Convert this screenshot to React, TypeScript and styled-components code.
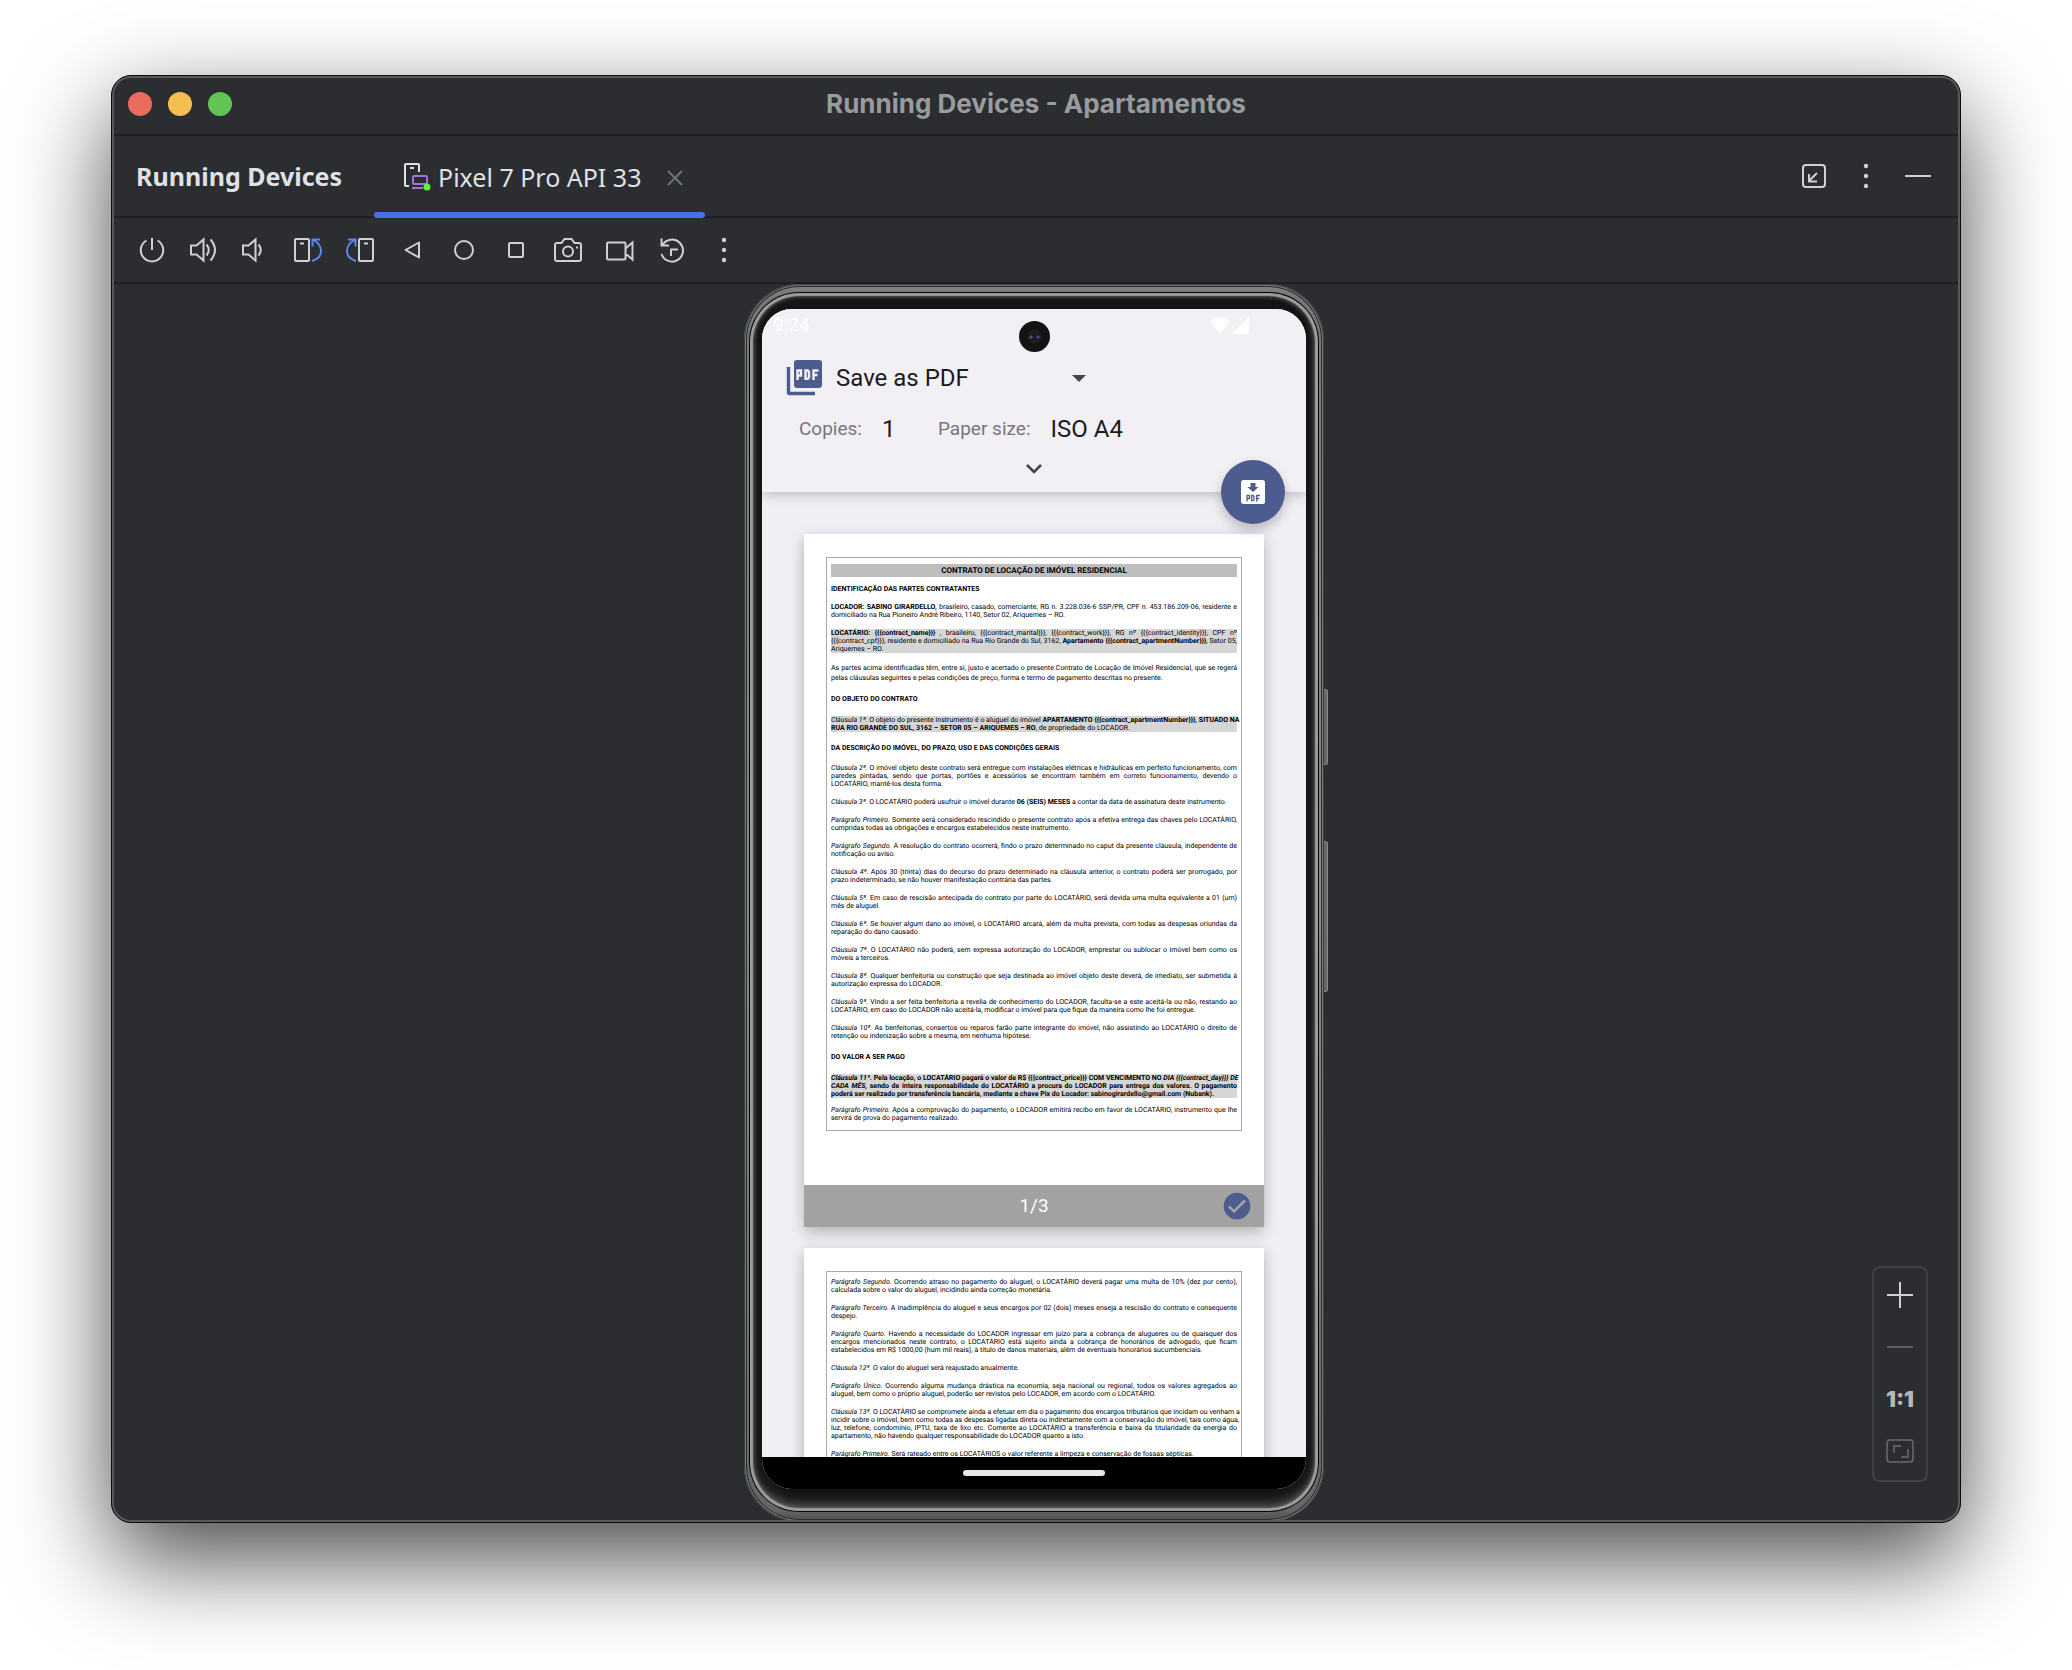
import React from "react";
import styled, { createGlobalStyle, css } from "styled-components";

const GlobalStyle = createGlobalStyle`
  *, *::before, *::after { box-sizing: border-box; }
  body { margin: 0; background: #fff; overflow: hidden; }
  button, input, select { font: inherit; color: inherit; background: none; border: 0; padding: 0; margin: 0; }
  p, h1, h2, h3 { margin: 0; font: inherit; }
`;

const ui = `"Noto Sans", "Open Sans", sans-serif`;
const android = `Roboto, "Liberation Sans", sans-serif`;

/* ---------- window ---------- */

const Desktop = styled.div`
  height: 100vh;
  padding: 75px 111px 147px;
`;

const Window = styled.main`
  height: 100%;
  display: flex;
  flex-direction: column;
  background: #2b2d30;
  border-radius: 20px;
  overflow: hidden;
  color: #dfe1e5;
  font-family: ${ui};
  border: 1px solid #0b0c0c;
  box-shadow: 0 36px 96px rgba(0, 0, 0, 0.72);
  position: relative;

  &::after {
    content: "";
    position: absolute;
    inset: 0;
    border: 2px solid #58595b;
    border-radius: 19px;
    pointer-events: none;
  }
`;

const TitleBar = styled.header`
  flex: none;
  height: 60px;
  display: grid;
  grid-template-columns: 1fr auto 1fr;
  align-items: center;
  padding: 0 16px 3px;
  border-bottom: 2px solid #1e1f22;
`;

const Lights = styled.div`
  display: flex;
  gap: 16px;
`;

const Light = styled.button<{ $color: string }>`
  width: 24px;
  height: 24px;
  border-radius: 50%;
  background: ${(p) => p.$color};
`;

const WindowTitle = styled.h1`
  font: 700 26px/32px Inter, sans-serif;
  color: #9a9b9d;
`;

const TabBar = styled.div`
  flex: none;
  height: 82px;
  display: flex;
  align-items: stretch;
  padding: 0 16px 0 24px;
  border-bottom: 2px solid #1e1f22;
`;

const ToolTitle = styled.h2`
  align-self: center;
  font: 700 25px/36px ${ui};
  margin-right: 32px;
`;

const Tab = styled.div`
  display: flex;
  align-items: center;
  padding: 0 20px 0 30px;
  margin-bottom: -2px;
  position: relative;
  font: 400 25px/36px ${ui};

  &::after {
    content: "";
    position: absolute;
    left: 0;
    right: 0;
    bottom: 0;
    height: 6px;
    border-radius: 3px;
    background: #4473e8;
  }
`;

const TabLabel = styled.button`
  display: flex;
  align-items: center;
  gap: 6px;
`;

const CloseTab = styled.button`
  display: flex;
  margin-left: 24px;
  color: #6f737a;
`;

const Spacer = styled.div`
  flex: 1;
`;

const ToolBar = styled.div`
  flex: none;
  height: 66px;
  display: flex;
  align-items: center;
  padding: 0 14px;
  border-bottom: 2px solid #1e1f22;
`;

const IconButton = styled.button<{ $dim?: boolean }>`
  width: 52px;
  height: 52px;
  display: grid;
  place-items: center;
  align-self: center;
  color: ${(p) => (p.$dim ? "#5a5d60" : "#ced0d6")};

  svg {
    display: block;
  }
`;

const Stage = styled.section`
  flex: 1;
  min-height: 0;
  display: flex;
  justify-content: center;
  position: relative;
`;

const ZoomPanel = styled.div`
  position: absolute;
  right: 32px;
  bottom: 40px;
  width: 56px;
  display: flex;
  flex-direction: column;
  align-items: center;
  padding: 1px 0 3px;
  border: 2px solid #3f4142;
  border-radius: 8px;
  background: #2b2d30;
`;

const ActualSize = styled(IconButton)`
  font: 900 22px/24px Inter, sans-serif;
  color: #b4b6b9;
`;

/* ---------- phone ---------- */

const Device = styled.div`
  display: flex;
`;

const Frame = styled.div`
  display: flex;
  padding: 8px 5px 10px;
  border-radius: 56px;
  background: linear-gradient(#858585, #777 1%, #8a8a8a 50%, #666 99%, #4c4c4c);
  box-shadow: inset 0 0 0 1px #3b3d3f, inset 0 0 0 2px #777a7a, inset 0 0 0 3px #2a2c2d;
`;

const Bezel = styled.div`
  display: flex;
  padding: 17px 13px 23px;
  border-radius: 50px;
  background: #141414;
  box-shadow: inset 0 0 0 1px #060606, inset 0 0 1px 4px #9c9c9c, inset 0 0 4px 5px #555,
    inset 0 -8px 12px #555;
`;

const SideButtons = styled.div`
  width: 4px;
  display: flex;
  flex-direction: column;
  gap: 76px;
  padding-top: 405px;
`;

const SideButton = styled.span<{ $length: number }>`
  height: ${(p) => p.$length}px;
  border: 1px solid #8a8a8a;
  border-left: 0;
  border-radius: 0 3px 3px 0;
  background: #666;
`;

const Screen = styled.div`
  width: 544px;
  display: flex;
  flex-direction: column;
  position: relative;
  overflow: hidden;
  border-radius: 30px;
  background: #f2f0f5;
  color: #1b1b1f;
  font-family: ${android};
`;

const PrintHeader = styled.header`
  flex: none;
  position: relative;
  z-index: 1;
  background: #f2f0f5;
  box-shadow: 0 2px 12px rgba(0, 0, 0, 0.24);
`;

const StatusBar = styled.div`
  height: 32px;
  display: flex;
  justify-content: space-between;
  align-items: center;
  padding: 0 57px 0 11px;
  font-size: 19px;
  line-height: 24px;
  color: #fff;
`;

const StatusIcons = styled.div`
  display: flex;
  gap: 2px;
`;

const Camera = styled.span`
  position: absolute;
  z-index: 3;
  top: 12px;
  left: 50%;
  width: 31px;
  height: 31px;
  margin-left: -15px;
  border-radius: 50%;
  background: radial-gradient(circle at 12px 16px, #3f6068 0 1px, transparent 2px),
    radial-gradient(circle at 19px 16px, #4747a0 0 1px, transparent 2px),
    radial-gradient(circle, #1d1d20 0 6px, #131314 8px);
`;

const Destination = styled.div`
  height: 44px;
  margin-top: 15px;
  padding-left: 24px;
  display: flex;
  align-items: center;
  gap: 13px;
`;

const DestinationPicker = styled.label`
  display: grid;
  grid-template-columns: 236px 14px;
  align-items: center;

  select {
    grid-area: 1 / 1 / 2 / 3;
  }

  svg {
    grid-area: 1 / 2;
    pointer-events: none;
  }
`;

const PlainSelect = styled.select`
  appearance: none;
  outline: 0;
  height: 32px;
  font-size: 24px;
  line-height: 32px;
`;

const Options = styled.div`
  height: 32px;
  margin-top: 13px;
  padding-left: 37px;
  display: flex;
  align-items: center;
  gap: 20px;
  font-size: 24px;
  line-height: 32px;
`;

const OptionLabel = styled.label`
  font-size: 19px;
  line-height: 24px;
  color: #77767d;
`;

const CopiesInput = styled.input`
  width: 36px;
  height: 32px;
  outline: 0;
`;

const ExpandButton = styled.button`
  width: 100%;
  height: 47px;
  display: grid;
  place-items: center;
  color: #46464f;
`;

const SaveButton = styled.button`
  position: absolute;
  z-index: 2;
  top: 151px;
  right: 21px;
  width: 64px;
  height: 64px;
  display: grid;
  place-items: center;
  border-radius: 50%;
  background: #4c5c8f;
  box-shadow: 0 6px 12px rgba(0, 0, 0, 0.22);
`;

const Preview = styled.div`
  flex: 1 1 0;
  min-height: 0;
  overflow: hidden;
  display: flex;
  flex-direction: column;
  gap: 21px;
  padding: 42px 42px 0;
  background: #f0eff4;
`;

const Sheet = styled.article`
  flex: none;
  background: #fff;
  box-shadow: 0 5px 14px rgba(0, 0, 0, 0.26);
`;

const Paper = styled.div`
  height: 651px;
  padding: 23px 22px;
`;

const PaperFrame = styled.div<{ $open?: boolean }>`
  ${(p) => p.$open && css`height: 600px;`}
  padding: 6px 4px 8px;
  border: 1px solid #a9a9a9;
  font-size: 7px;
  line-height: 8px;
  color: #000;
  text-rendering: geometricPrecision;
`;

const SheetFooter = styled.footer`
  height: 42px;
  display: grid;
  grid-template-columns: 1fr auto 1fr;
  align-items: center;
  padding: 0 13px;
  background: #a2a2a2;
  color: #fff;
  font-size: 19px;
  line-height: 24px;
`;

const PageCheck = styled.label`
  grid-column: 3;
  justify-self: end;
  display: grid;

  input {
    grid-area: 1 / 1;
    appearance: none;
    width: 28px;
    height: 28px;
  }

  svg {
    grid-area: 1 / 1;
    pointer-events: none;
  }
`;

const PageNumber = styled.span`
  grid-column: 2;
`;

const ContractTitle = styled.h2`
  font-size: 8px;
  font-weight: 700;
  line-height: 13px;
  text-align: center;
  background: #bebebe;
`;

const Heading = styled.h3<{ $top: number }>`
  margin-top: ${(p) => p.$top}px;
  font-weight: 700;
`;

const Paragraph = styled.p<{ $top: number; $mark?: boolean; $tall?: boolean; $bold?: boolean }>`
  margin-top: ${(p) => p.$top}px;
  background: ${(p) => (p.$mark ? "#d6d6d6" : "none")};
  font-weight: ${(p) => (p.$bold ? 700 : 400)};
  line-height: ${(p) => (p.$tall ? 10 : 8)}px;
`;

const Line = styled.span`
  display: block;
  white-space: nowrap;
  text-align: justify;
  text-align-last: justify;

  &:last-child {
    text-align-last: left;
  }
`;

const NavBar = styled.div`
  flex: none;
  height: 32px;
  display: grid;
  place-items: center;
  background: #000;
`;

const NavPill = styled.span`
  width: 142px;
  height: 6px;
  border-radius: 3px;
  background: #e8e8e8;
`;

/* ---------- icons ---------- */

const Glyph = ({ children, size = 32 }: { children: React.ReactNode; size?: number }) => (
  <svg width={size} height={size} viewBox={`0 0 ${size} ${size}`} fill="none" stroke="currentColor" strokeWidth="2" aria-hidden="true">
    {children}
  </svg>
);

const speaker = <path d="M3 11.5h5.5L15.5 5.5v21l-7-6H3z" />;
const rotate = (
  <>
    <rect x="3" y="5" width="14" height="22" rx="1" />
    <path d="M8 9.5h4" />
    <path d="M20.5 12.5V5.5H28M21.5 6C32 12 31.5 23.5 20 27" stroke="#5a87f0" />
  </>
);
const dots = (
  <g fill="currentColor" stroke="none">
    <circle cx="16" cy="6" r="2.2" />
    <circle cx="16" cy="16" r="2.2" />
    <circle cx="16" cy="26" r="2.2" />
  </g>
);

const tools: { name: string; icon: React.ReactNode }[] = [
  { name: "Power", icon: <path d="M16 4v12M10.5 6.5A11.2 11.2 0 1 0 21.5 6.5" /> },
  { name: "Volume Up", icon: <>{speaker}<path d="M18.5 10.5q4.5 5.5 0 11M22.5 5.5q9 10.5 0 21" /></> },
  { name: "Volume Down", icon: <>{speaker}<path d="M18.5 10.5q4.5 5.5 0 11" /></> },
  { name: "Rotate Left", icon: rotate },
  { name: "Rotate Right", icon: <g transform="matrix(-1 0 0 1 32 0)">{rotate}</g> },
  { name: "Back", icon: <path d="M23 8.5v15L9.5 16z" strokeLinejoin="round" /> },
  { name: "Home", icon: <circle cx="16" cy="16" r="9" /> },
  { name: "Overview", icon: <rect x="9" y="9" width="14" height="14" rx="1" /> },
  {
    name: "Take Screenshot",
    icon: (
      <>
        <path d="M5 9h4.5l3-4h7l3 4H27a2 2 0 0 1 2 2v14a2 2 0 0 1-2 2H5a2 2 0 0 1-2-2V11a2 2 0 0 1 2-2z" />
        <circle cx="16" cy="17.5" r="5" />
        <path d="M24 13.5h2" />
      </>
    ),
  },
  {
    name: "Record Screen",
    icon: <path d="M4 8.5h16.5a1 1 0 0 1 1 1v15a1 1 0 0 1-1 1H4a1 1 0 0 1-1-1v-15a1 1 0 0 1 1-1zM21.5 14.5l7-6v17l-7-6" />,
  },
  {
    name: "Snapshots",
    icon: <path d="M5.5 4.500v7h7.500M6.500 11A11 11 0 1 1 5.500 20M15 22v-6.500h7" />,
  },
  { name: "More", icon: dots },
];

const DeviceIcon = () => (
  <Glyph size={28}>
    <path d="M5 23H2a1 1 0 0 1-1-1V2a1 1 0 0 1 1-1h12a1 1 0 0 1 1 1v7" />
    <path d="M6 5h4" />
    <rect x="9" y="13" width="14" height="8" rx="1" stroke="#a06fe0" />
    <path d="M8 25h11" stroke="#a06fe0" />
    <circle cx="23" cy="24" r="3.5" fill="#62f045" stroke="none" />
  </Glyph>
);

const PdfStackIcon = () => (
  <svg width="37" height="38" viewBox="0 0 37 38" aria-hidden="true">
    <path d="M2.500 8v25.500a1 1 0 0 0 1 1h25.500" fill="none" stroke="#4c5c8f" strokeWidth="3.4" />
    <rect x="8" y="1" width="28" height="28" rx="3" fill="#4c5c8f" />
    <g fill="none" stroke="#f2f0f5" strokeWidth="2.4">
      <path d="M11.5 21v-9.500h3.500v5h-3.500M19.500 11.500v8.300h2.200l1.300-1.300v-5.700l-1.300-1.300zM27.500 21v-9.500h5M27.500 16h4" />
    </g>
  </svg>
);

const SaveIcon = () => (
  <svg width="24" height="24" viewBox="0 0 24 24" aria-hidden="true">
    <rect width="24" height="24" rx="2.5" fill="#fff" />
    <path d="M9.5 3h5v4h3L12 12 6.5 7h3z" fill="#4c5c8f" />
    <path d="M6 21.5v-6h2.500v3H6M10.700 15.500v5.200h1.300l1-1v-3.200l-1-1zM15.700 21.500v-6h3.300M15.700 18.500h2.600" fill="none" stroke="#4c5c8f" strokeWidth="1.3" />
  </svg>
);

/* ---------- contract ---------- */

type Block =
  | { heading: string; top: number }
  | { lines: React.ReactNode[]; top: number; mark?: boolean; tall?: boolean; bold?: boolean };

const B = ({ children }: { children: React.ReactNode }) => <b>{children}</b>;

const firstPage: Block[] = [
  { heading: "IDENTIFICAÇÃO DAS PARTES CONTRATANTES", top: 8 },
  {
    top: 10,
    lines: [
      <><B>LOCADOR: SABINO GIRARDELLO,</B> brasileiro, casado, comerciante, RG n. 3.228.036-6 SSP/PR, CPF n. 453.186.209-06, residente e</>,
      "domiciliado na Rua Pioneiro André Ribeiro, 1140, Setor 02, Ariquemes – RO.",
    ],
  },
  {
    top: 10,
    mark: true,
    lines: [
      <><B>LOCATÁRIO: {"{{{contract_name}}}"}</B> , brasileiro, {"{{{contract_marital}}}"}, {"{{{contract_work}}}"}, RG nº {"{{{contract_identity}}}"}, CPF nº</>,
      <>{"{{{contract_cpf}}}"}, residente e domiciliado na Rua Rio Grande do Sul, 3162, <B>Apartamento {"{{{contract_apartmentNumber}}}"}</B>, Setor 05,</>,
      "Ariquemes – RO.",
    ],
  },
  {
    top: 10,
    tall: true,
    lines: [
      "As partes acima identificadas têm, entre si, justo e acertado o presente Contrato de Locação de Imóvel Residencial, que se regerá",
      "pelas cláusulas seguintes e pelas condições de preço, forma e termo de pagamento descritas no presente.",
    ],
  },
  { heading: "DO OBJETO DO CONTRATO", top: 12 },
  {
    top: 13,
    mark: true,
    lines: [
      <><i>Cláusula 1ª.</i> O objeto do presente instrumento é o aluguel do imóvel <B>APARTAMENTO {"{{{contract_apartmentNumber}}}"}, SITUADO NA</B></>,
      <><B>RUA RIO GRANDE DO SUL, 3162 – SETOR 05 – ARIQUEMES – RO</B>, de propriedade do LOCADOR.</>,
    ],
  },
  { heading: "DA DESCRIÇÃO DO IMÓVEL, DO PRAZO, USO E DAS CONDIÇÕES GERAIS", top: 12 },
  {
    top: 12,
    lines: [
      <><i>Cláusula 2ª.</i> O imóvel objeto deste contrato será entregue com instalações elétricas e hidráulicas em perfeito funcionamento, com</>,
      "paredes pintadas, sendo que portas, portões e acessórios se encontram também em correto funcionamento, devendo o",
      "LOCATÁRIO, mantê-los desta forma.",
    ],
  },
  {
    top: 10,
    lines: [<><i>Cláusula 3ª.</i> O LOCATÁRIO poderá usufruir o imóvel durante <B>06 (SEIS) MESES</B> a contar da data de assinatura deste instrumento.</>],
  },
  {
    top: 10,
    lines: [
      <><i>Parágrafo Primeiro.</i> Somente será considerado rescindido o presente contrato após a efetiva entrega das chaves pelo LOCATÁRIO,</>,
      "cumpridas todas as obrigações e encargos estabelecidos neste instrumento.",
    ],
  },
  {
    top: 10,
    lines: [
      <><i>Parágrafo Segundo.</i> A resolução do contrato ocorrerá, findo o prazo determinado no caput da presente cláusula, independente de</>,
      "notificação ou aviso.",
    ],
  },
  {
    top: 10,
    lines: [
      <><i>Cláusula 4ª.</i> Após 30 (trinta) dias do decurso do prazo determinado na cláusula anterior, o contrato poderá ser prorrogado, por</>,
      "prazo indeterminado, se não houver manifestação contrária das partes.",
    ],
  },
  {
    top: 10,
    lines: [
      <><i>Cláusula 5ª.</i> Em caso de rescisão antecipada do contrato por parte do LOCATÁRIO, será devida uma multa equivalente a 01 (um)</>,
      "mês de aluguel.",
    ],
  },
  {
    top: 10,
    lines: [
      <><i>Cláusula 6ª.</i> Se houver algum dano ao imóvel, o LOCATÁRIO arcará, além da multa prevista, com todas as despesas oriundas da</>,
      "reparação do dano causado.",
    ],
  },
  {
    top: 10,
    lines: [
      <><i>Cláusula 7ª.</i> O LOCATÁRIO não poderá, sem expressa autorização do LOCADOR, emprestar ou sublocar o imóvel bem como os</>,
      "móveis a terceiros.",
    ],
  },
  {
    top: 10,
    lines: [
      <><i>Cláusula 8ª.</i> Qualquer benfeitoria ou construção que seja destinada ao imóvel objeto deste deverá, de imediato, ser submetida à</>,
      "autorização expressa do LOCADOR.",
    ],
  },
  {
    top: 10,
    lines: [
      <><i>Cláusula 9ª.</i> Vindo a ser feita benfeitoria a revelia de conhecimento do LOCADOR, faculta-se a este aceitá-la ou não, restando ao</>,
      "LOCATÁRIO, em caso do LOCADOR não aceitá-la, modificar o imóvel para que fique da maneira como lhe foi entregue.",
    ],
  },
  {
    top: 10,
    lines: [
      <><i>Cláusula 10ª.</i> As benfeitorias, consertos ou reparos farão parte integrante do imóvel, não assistindo ao LOCATÁRIO o direito de</>,
      "retenção ou indenização sobre a mesma, em nenhuma hipótese.",
    ],
  },
  { heading: "DO VALOR A SER PAGO", top: 13 },
  {
    top: 13,
    mark: true,
    bold: true,
    lines: [
      <><i>Cláusula 11ª.</i> Pela locação, o LOCATÁRIO pagará o valor de R$ {"{{{contract_price}}}"} COM VENCIMENTO NO <i>DIA {"{{{contract_day}}}"} DE</i></>,
      <><i>CADA MÊS,</i> sendo de inteira responsabilidade do LOCATÁRIO a procura do LOCADOR para entrega dos valores. O pagamento</>,
      "poderá ser realizado por transferência bancária, mediante a chave Pix do Locador: sabinogirardello@gmail.com (Nubank).",
    ],
  },
  {
    top: 8,
    lines: [
      <><i>Parágrafo Primeiro.</i> Após a comprovação do pagamento, o LOCADOR emitirá recibo em favor de LOCATÁRIO, instrumento que lhe</>,
      "servirá de prova do pagamento realizado.",
    ],
  },
];

const secondPage: Block[] = [
  {
    top: 0,
    lines: [
      <><i>Parágrafo Segundo.</i> Ocorrendo atraso no pagamento do aluguel, o LOCATÁRIO deverá pagar uma multa de 10% (dez por cento),</>,
      "calculada sobre o valor do aluguel, incidindo ainda correção monetária.",
    ],
  },
  {
    top: 10,
    lines: [
      <><i>Parágrafo Terceiro.</i> A inadimplência do aluguel e seus encargos por 02 (dois) meses enseja a rescisão do contrato e consequente</>,
      "despejo.",
    ],
  },
  {
    top: 10,
    lines: [
      <><i>Parágrafo Quarto.</i> Havendo a necessidade do LOCADOR ingressar em juízo para a cobrança de alugueres ou de quaisquer dos</>,
      "encargos mencionados neste contrato, o LOCATÁRIO está sujeito ainda a cobrança de honorários de advogado, que ficam",
      "estabelecidos em R$ 1000,00 (hum mil reais), à título de danos materiais, além de eventuais honorários sucumbenciais.",
    ],
  },
  { top: 10, lines: [<><i>Cláusula 12ª.</i> O valor do aluguel será reajustado anualmente.</>] },
  {
    top: 10,
    lines: [
      <><i>Parágrafo Único.</i> Ocorrendo alguma mudança drástica na economia, seja nacional ou regional, todos os valores agregados ao</>,
      "aluguel, bem como o próprio aluguel, poderão ser revistos pelo LOCADOR, em acordo com o LOCATÁRIO.",
    ],
  },
  {
    top: 10,
    lines: [
      <><i>Cláusula 13ª.</i> O LOCATÁRIO se compromete ainda a efetuar em dia o pagamento dos encargos tributários que incidam ou venham a</>,
      "incidir sobre o imóvel, bem como todas as despesas ligadas direta ou indiretamente com a conservação do imóvel, tais como água,",
      "luz, telefone, condomínio, IPTU, taxa de lixo etc. Comente ao LOCATÁRIO a transferência e baixa da titularidade da energia do",
      "apartamento, não havendo qualquer responsabilidade do LOCADOR quanto a isto.",
    ],
  },
  {
    top: 10,
    lines: [<><i>Parágrafo Primeiro.</i> Será rateado entre os LOCATÁRIOS o valor referente a limpeza e conservação de fossas sépticas.</>],
  },
];

const Blocks = ({ blocks }: { blocks: Block[] }) => (
  <>
    {blocks.map((block, i) =>
      "heading" in block ? (
        <Heading key={i} $top={block.top}>{block.heading}</Heading>
      ) : (
        <Paragraph key={i} $top={block.top} $mark={block.mark} $tall={block.tall} $bold={block.bold}>
          {block.lines.map((line, j) => (
            <Line key={j}>{line}</Line>
          ))}
        </Paragraph>
      )
    )}
  </>
);

const PrintScreen = () => (
  <Screen>
    <Camera />
    <PrintHeader>
      <StatusBar>
        <span>9:24</span>
        <StatusIcons>
          <svg width="20" height="17" viewBox="0 0 20 17" aria-hidden="true">
            <path d="M0 4.5Q10-4 20 4.5L10 17z" fill="#fff" />
          </svg>
          <svg width="17" height="17" viewBox="0 0 17 17" aria-hidden="true">
            <path d="M17 0v17H0z" fill="#fff" />
          </svg>
        </StatusIcons>
      </StatusBar>
      <Destination>
        <PdfStackIcon />
        <DestinationPicker>
          <PlainSelect aria-label="Destination">
            <option>Save as PDF</option>
          </PlainSelect>
          <svg width="14" height="7" viewBox="0 0 14 7" aria-hidden="true">
            <path d="M0 0h14L7 7z" fill="#46464f" />
          </svg>
        </DestinationPicker>
      </Destination>
      <Options>
        <OptionLabel htmlFor="copies">Copies:</OptionLabel>
        <CopiesInput id="copies" defaultValue="1" />
        <OptionLabel htmlFor="paper">Paper size:</OptionLabel>
        <PlainSelect id="paper">
          <option>ISO A4</option>
        </PlainSelect>
      </Options>
      <ExpandButton aria-label="More options">
        <svg width="16" height="10" viewBox="0 0 16 10" fill="none" stroke="currentColor" strokeWidth="2.6" aria-hidden="true">
          <path d="M1 1l7 7 7-7" />
        </svg>
      </ExpandButton>
    </PrintHeader>
    <SaveButton aria-label="Save to PDF">
      <SaveIcon />
    </SaveButton>
    <Preview>
      <Sheet>
        <Paper>
          <PaperFrame>
            <ContractTitle>CONTRATO DE LOCAÇÃO DE IMÓVEL RESIDENCIAL</ContractTitle>
            <Blocks blocks={firstPage} />
          </PaperFrame>
        </Paper>
        <SheetFooter>
          <PageNumber>1/3</PageNumber>
          <PageCheck>
            <input type="checkbox" defaultChecked aria-label="Page 1 of 3" />
            <svg width="28" height="28" viewBox="0 0 28 28" aria-hidden="true">
              <circle cx="14" cy="14" r="13.3" fill="#4c5c8f" />
              <path d="M6 14.5l5 5L22 8.5" fill="none" stroke="#a2a2a2" strokeWidth="2.6" />
            </svg>
          </PageCheck>
        </SheetFooter>
      </Sheet>
      <Sheet>
        <Paper>
          <PaperFrame $open>
            <Blocks blocks={secondPage} />
          </PaperFrame>
        </Paper>
      </Sheet>
    </Preview>
    <NavBar>
      <NavPill />
    </NavBar>
  </Screen>
);

export default function App() {
  return (
    <>
      <GlobalStyle />
      <Desktop>
        <Window>
          <TitleBar>
            <Lights>
              <Light $color="#ec6a5e" aria-label="Close" />
              <Light $color="#f5bf4f" aria-label="Minimize" />
              <Light $color="#61c454" aria-label="Zoom" />
            </Lights>
            <WindowTitle>Running Devices - Apartamentos</WindowTitle>
          </TitleBar>
          <TabBar>
            <ToolTitle>Running Devices</ToolTitle>
            <Tab>
              <TabLabel>
                <DeviceIcon />
                Pixel 7 Pro API 33
              </TabLabel>
              <CloseTab aria-label="Close tab">
                <Glyph size={20}>
                  <path d="M3 4l14 14M17 4L3 18" />
                </Glyph>
              </CloseTab>
            </Tab>
            <Spacer />
            <IconButton aria-label="Dock">
              <Glyph>
                <rect x="5" y="5" width="22" height="22" rx="3" />
                <path d="M19 13l-7.5 7.5M11 14v7.5h8" />
              </Glyph>
            </IconButton>
            <IconButton aria-label="Options">
              <Glyph>{dots}</Glyph>
            </IconButton>
            <IconButton aria-label="Hide">
              <Glyph>
                <path d="M3 16h26" />
              </Glyph>
            </IconButton>
          </TabBar>
          <ToolBar>
            {tools.map((t) => (
              <IconButton key={t.name} aria-label={t.name}>
                <Glyph>{t.icon}</Glyph>
              </IconButton>
            ))}
          </ToolBar>
          <Stage>
            <Device>
              <Frame>
                <Bezel>
                  <PrintScreen />
                </Bezel>
              </Frame>
              <SideButtons>
                <SideButton $length={76} />
                <SideButton $length={151} />
              </SideButtons>
            </Device>
            <ZoomPanel>
              <IconButton aria-label="Zoom in">
                <Glyph><path d="M3 16h26M16 3v26" /></Glyph>
              </IconButton>
              <IconButton $dim aria-label="Zoom out">
                <Glyph><path d="M3 16h26" /></Glyph>
              </IconButton>
              <ActualSize>1:1</ActualSize>
              <IconButton $dim aria-label="Fit to screen">
                <Glyph>
                  <rect x="3" y="5" width="26" height="22" rx="3" />
                  <path d="M10 18v-7h7M17 22h7v-8" />
                </Glyph>
              </IconButton>
            </ZoomPanel>
          </Stage>
        </Window>
      </Desktop>
    </>
  );
}
